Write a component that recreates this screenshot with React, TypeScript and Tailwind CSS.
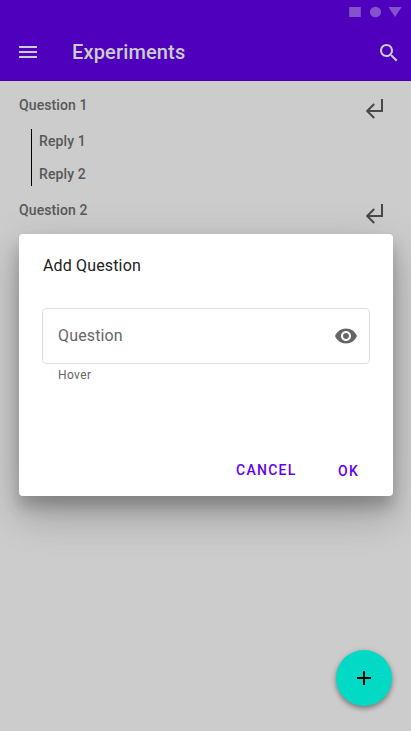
import React from "react";

function ReturnArrow() {
  return (
    <svg className="h-6 w-6" viewBox="0 0 24 24" fill="none" stroke="#484848" strokeWidth="2">
      <path d="M16 3v12H1.4M8.2 8L1.2 15l7 7" />
    </svg>
  );
}

function QuestionRow({ label }: { label: string }) {
  return (
    <div className="flex h-6 items-start justify-between pr-[21px] pl-[19px]">
      <span className="text-sm leading-6 font-medium tracking-[0.1px]">{label}</span>
      <button className="mt-[3px] h-6 w-6" aria-label="Reply">
        <ReturnArrow />
      </button>
    </div>
  );
}

function StatusBar() {
  return (
    <div className="flex h-6 justify-end pr-[9px]">
      <svg className="h-6 w-[53px] fill-[#8353cd]" viewBox="0 0 53 24">
        <rect x="0.2" y="7" width="11.6" height="10" />
        <ellipse cx="26.5" cy="12" rx="5.6" ry="5.2" />
        <path d="M39.5 7h13.2L46 17z" />
      </svg>
    </div>
  );
}

function AppBar() {
  return (
    <header className="h-[81px] border-b border-[#4a00a8] bg-[#4e00bd] text-[#cccccc]">
      <StatusBar />
      <div className="flex h-14 items-center pr-[10px] pl-4">
        <button aria-label="Menu">
          <svg className="h-6 w-6 fill-[#cccccc]" viewBox="0 0 24 24">
            <path d="M3 18h18v-2H3v2zm0-5h18v-2H3v2zm0-7v2h18V6H3z" />
          </svg>
        </button>
        <h1 className="ml-8 flex-1 text-xl font-medium tracking-[0.15px]">Experiments</h1>
        <button className="pt-[2px]" aria-label="Search">
          <svg className="h-6 w-6 fill-[#cccccc]" viewBox="0 0 24 24">
            <path d="M15.5 14h-.79l-.28-.27C15.41 12.59 16 11.11 16 9.5 16 5.91 13.09 3 9.5 3S3 5.91 3 9.5 5.91 16 9.5 16c1.61 0 3.09-.59 4.23-1.57l.27.28v.79l5 4.99L20.49 19l-4.99-5zm-6 0C7.01 14 5 11.99 5 9.5S7.01 5 9.5 5 14 7.01 14 9.5 11.99 14 9.5 14z" />
          </svg>
        </button>
      </div>
    </header>
  );
}

function AddQuestionDialog() {
  return (
    <section
      role="dialog"
      className="absolute top-[234px] left-[19px] flex h-[262px] w-[374px] flex-col rounded-[4px] bg-white shadow-[0_11px_15px_rgba(0,0,0,0.2),0_9px_46px_rgba(0,0,0,0.12),0_24px_38px_rgba(0,0,0,0.14)]"
    >
      <h2 className="pt-5 pl-6 text-base leading-6 tracking-[0.15px] text-[#212121]">Add Question</h2>
      <div className="mx-[23px] mt-[30px] flex h-14 items-center justify-between rounded-[4px] border border-[#dedede] pr-[11px] pl-[15px]">
        <span className="text-base leading-6 tracking-[0.15px] text-[#666666]">Question</span>
        <svg className="mb-px h-6 w-6 fill-[#666666]" viewBox="0 0 24 24">
          <path d="M12 4.5C7 4.5 2.73 7.61 1 12c1.73 4.39 6 7.5 11 7.5s9.27-3.11 11-7.5c-1.73-4.39-6-7.5-11-7.5zM12 17c-2.76 0-5-2.24-5-5s2.24-5 5-5 5 2.24 5 5-2.24 5-5 5zm0-8c-1.66 0-3 1.34-3 3s1.34 3 3 3 3-1.34 3-3-1.34-3-3-3z" />
        </svg>
      </div>
      <p className="pt-[3px] pl-[39px] text-xs leading-4 tracking-[0.4px] text-[#666666]">Hover</p>
      <div className="mt-auto flex items-start justify-end gap-[41.5px] pr-[34px] pb-[17px] text-sm leading-4 font-medium tracking-[1.25px] text-[#6002ee]">
        <button>CANCEL</button>
        <button className="pt-px">OK</button>
      </div>
    </section>
  );
}

export default function App() {
  return (
    <div className="relative h-[731px] w-[411px] overflow-hidden bg-[#cccccc] font-[Roboto,sans-serif] text-[#585858]">
      <AppBar />
      <main className="pt-3">
        <QuestionRow label="Question 1" />
        <div className="mt-3 mb-3 ml-[31px] flex h-[57px] flex-col gap-[9px] border-l border-black pl-[7px] text-sm leading-6 font-medium tracking-[0.1px]">
          <span>Reply 1</span>
          <span>Reply 2</span>
        </div>
        <QuestionRow label="Question 2" />
      </main>
      <AddQuestionDialog />
      <button
        aria-label="Add"
        className="absolute top-[650px] left-[336px] flex h-14 w-14 items-center justify-center rounded-full bg-[#03dac5] shadow-[0_3px_5px_rgba(0,0,0,0.3),0_1px_6px_rgba(0,0,0,0.15)]"
      >
        <svg className="h-6 w-6 fill-black" viewBox="0 0 24 24">
          <path d="M19 13h-6v6h-2v-6H5v-2h6V5h2v6h6v2z" />
        </svg>
      </button>
    </div>
  );
}
